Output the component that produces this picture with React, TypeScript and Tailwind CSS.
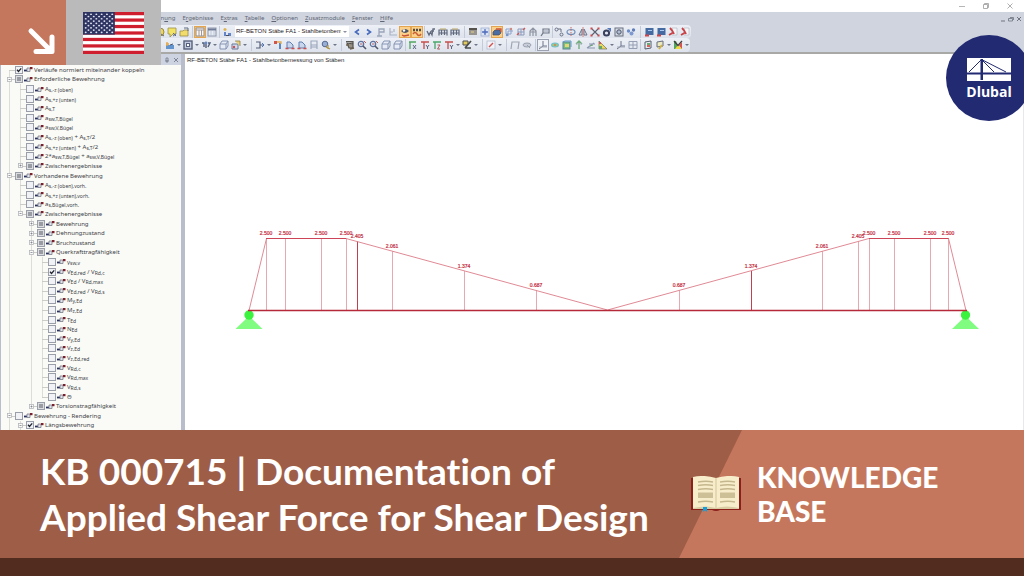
import { useEffect, useRef } from "react";
import type { ReactNode } from "react";

/* ---------- toolbar glyphs (12 x 12 grid) ---------- */

const glyphs: Record<string, ReactNode> = {
  coin: <><circle cx="6" cy="6" r="4" fill="#f2d335" stroke="#8a7a2a" /><path d="M7 8l3 2" stroke="#555" /></>,
  note: <><path d="M2 2h8v6H7l-3 3V8H2z" fill="#f6e24c" stroke="#8b8130" strokeWidth=".8" /><path d="M7 7l3 3M7 10l3-2" stroke="#4c5a78" /></>,
  folder: <><path d="M2 5h3l1-1h4v6H2z" fill="#f5dc55" stroke="#8d7b2c" strokeWidth=".8" /><path d="M6 2h4v3" fill="none" stroke="#4a5570" /></>,
  calc: <><rect x="2" y="2" width="8" height="8" fill="#fff" stroke="#7a7f94" /><path d="M2 4h8M5 4v6M7.500 4v6" stroke="#8d8fa2" /></>,
  table: <><rect x="2" y="2" width="8" height="8" fill="#e9edf5" stroke="#7d879c" /><path d="M2 3.500h8" stroke="#5a6786" strokeWidth="2" /><path d="M5 4v6M8 4v6" stroke="#a9b1c4" strokeWidth=".7" /></>,
  load: <><path d="M4 2v3M2.500 3.500h3" stroke="#e0a92c" strokeWidth="1.300" fill="none" /><path d="M3 6h2v4H3zM7 7h3v3H7z" fill="#4d74c4" /><path d="M5 9.500h3" stroke="#333" /></>,
  prev: <path d="M8 3.500L4.500 6 8 8.500" fill="none" stroke="#2d55b5" strokeWidth="1.600" />,
  next: <path d="M4 3.500L7.500 6 4 8.500" fill="none" stroke="#2d55b5" strokeWidth="1.600" />,
  flag: <><path d="M4 10V3h5v3H4M2 10h5" fill="none" stroke="#8f9ab0" strokeWidth="1.300" /></>,
  axis: <><path d="M3 2v7h7M3 6h3M7 3v3" fill="none" stroke="#a2abbd" strokeWidth="1.200" /></>,
  eye: <><path d="M2 5q4-4 8 0-4 4-8 0z" fill="#31405f" /><circle cx="5" cy="4.500" r="1.200" fill="#fff" /><path d="M3 9l2 1 5-1" stroke="#c03a2a" strokeWidth="1.300" fill="none" /></>,
  values: <><path d="M2 4h2M5 4h2M8 4h2" stroke="#333" strokeWidth="2.500" /><path d="M2 8q2-3 4 0t4 0" stroke="#c24b26" strokeWidth="1.500" fill="none" /></>,
  glasses: <><path d="M2 5l2 4 1.500-3L7 9l1-6h2M6 5h3" fill="none" stroke="#4b5469" strokeWidth="1.300" /></>,
  beam: <><path d="M2 9.500V4h8v5.500M2 7h8M4.500 4v5M7.500 4v5" stroke="#49536a" fill="none" strokeWidth="1.200" /><path d="M3 3h6" stroke="#b59b4a" /></>,
  card: <><rect x="2" y="3" width="8" height="6" fill="#8b877f" /><path d="M2 3h8" stroke="#3d3931" strokeWidth="2" /><path d="M4 6h3" stroke="#e8cd72" /></>,
  target: <><rect x="2" y="2" width="8" height="8" fill="#dde5f6" stroke="#889cc8" strokeWidth=".7" /><path d="M6 3v6M3 6h6" stroke="#4163b6" strokeWidth="1.300" /><circle cx="6" cy="6" r="1.600" fill="#4163b6" /></>,
  car: <><path d="M2 6l2-2h5l1 3-2 2H2z" fill="#2e5ba9" stroke="#273353" strokeWidth=".7" /><path d="M5 3h5v3" stroke="#c63c2b" fill="none" strokeWidth="1.300" /></>,
  nodes: <><path d="M3 3h5v5H3zM5 5h5M5 10V5" fill="none" stroke="#7f98c7" /><circle cx="8" cy="3" r="1.200" fill="#ca766c" /><circle cx="4" cy="9" r="1.200" fill="#6a87bd" /></>,
  cubeRed: <><path d="M3 3h6v6H3zM3 6h6M6 3v6" fill="none" stroke="#7d8fb4" /><path d="M2 9l2-2M8 4l2-2" stroke="#c34340" strokeWidth="1.400" /></>,
  build: <><path d="M3 10V5l3-3 3 3v5M3 6h6M6 3v7" stroke="#7f8594" fill="none" strokeWidth="1.200" /></>,
  frameP: <><path d="M2 10L4 7V3h6v4H4" fill="none" stroke="#5b6375" strokeWidth="1.200" /><path d="M5 5h4" stroke="#8a92a5" /></>,
  copyNode: <><circle cx="3.500" cy="3.500" r="1.500" fill="none" stroke="#525a70" /><circle cx="8.500" cy="8.500" r="1.500" fill="none" stroke="#525a70" /><path d="M5 3h3v3" stroke="#525a70" fill="none" /></>,
  rotate: <><ellipse cx="6" cy="6" rx="4" ry="2.500" fill="none" stroke="#5a7fae" strokeWidth="1.200" /><path d="M6 1v10" stroke="#c3534b" strokeDasharray="1.500 1" /></>,
  mirror: <><path d="M5 3v6H2zM7 3v6h3z" fill="none" stroke="#565f76" /><path d="M6 1v10" stroke="#c3534b" strokeWidth=".8" /></>,
  cross: <><path d="M3 3l6 6M9 3L3 9" stroke="#42485a" strokeWidth="1.100" /><path d="M1.500 1.500h2v2h-2zM8.500 1.500h2v2h-2zM1.500 8.500h2v2h-2zM8.500 8.500h2v2h-2z" fill="#c62f31" /></>,
  ring: <><circle cx="5.500" cy="7" r="2.600" fill="none" stroke="#1d2444" strokeWidth="2" /><path d="M6 2h4v4" fill="#3e65b0" /></>,
  lens: <><rect x="2" y="2" width="8" height="8" fill="#d7dae2" stroke="#555c6e" /><circle cx="6" cy="6" r="2.200" fill="#a8b6ce" stroke="#333c54" /></>,
  balls: <><circle cx="3.500" cy="5" r="1.700" fill="#587dc2" /><circle cx="8.500" cy="4" r="1.700" fill="#496aab" /><circle cx="6.500" cy="7.500" r="2" fill="#6c8cca" /></>,
  screen: <><rect x="2.500" y="2" width="8" height="7" fill="#2a5595" /><path d="M5 4.500h4" stroke="#9fc3f3" /><path d="M2 9.500h4" stroke="#ce2a2a" strokeWidth="2" /></>,
  pdf: <><path d="M5 2h5v7H5z" fill="#f7f7f9" stroke="#a7a7b4" strokeWidth=".6" /><path d="M3 2q3 3 4 6M2 9l5-3" stroke="#c4262b" strokeWidth="1.800" fill="none" /></>,
  newLoad: <><path d="M2 6h8v4H2z" fill="#4e86c7" /><path d="M3 3v4M2 5h3" stroke="#e59f30" strokeWidth="1.400" /><path d="M6 6l3-1" stroke="#253957" /></>,
  square: <><rect x="2" y="2" width="8" height="8" fill="#bcc6dc" stroke="#3f4a68" strokeWidth="1.400" /><rect x="4.500" y="4.500" width="3" height="3" fill="#fff" stroke="#3f4a68" /></>,
  hinge: <><path d="M2 4h2v4M6 3v6M8 4h2L8 8" stroke="#3b4864" fill="none" strokeWidth="1.400" /><circle cx="6" cy="4" r="1.400" fill="#4f79bd" /></>,
  box: <><path d="M2 5l2-3h6v5l-2 3H2zM2 5h6v5M8 5l2-3" fill="#e7ecf6" stroke="#7787a9" /></>,
  boxRed: <><path d="M2 5h6v5H2z" fill="#cfd9ec" stroke="#566788" /><path d="M5 2h5v5" fill="#e9cc64" stroke="#7d6b31" strokeWidth=".8" /><circle cx="4" cy="8" r="1.200" fill="#c33" /></>,
  dim: <><path d="M2 3h4v6H2M6 6h4" fill="none" stroke="#3c4967" strokeWidth="1.200" /><path d="M8 4l2 2-2 2" fill="none" stroke="#3564b5" /></>,
  pin: <><path d="M8 4v6" stroke="#2f6abb" strokeWidth="1.800" /><path d="M2 2h3v3H2z" fill="#cf3b31" /><path d="M5 3h4v2" fill="none" stroke="#dba13a" strokeWidth="1.300" /></>,
  support: <><path d="M3 9V3h3l3 3v3z" fill="#c5d3ea" stroke="#4a6da6" /><path d="M1.500 9.500h3M7.500 9.500h3" stroke="#cc3732" strokeWidth="1.700" /></>,
  ghost: <><path d="M3 2h6v4H3zM3 10V6M9 10V6M3 8h6" fill="none" stroke="#8f9bb3" strokeWidth="1.100" /></>,
  globe: <><circle cx="5" cy="5" r="2.800" fill="#8aa5ce" stroke="#3d5380" /><path d="M6 8l4 2M8 6v4" stroke="#ac8a2c" strokeWidth="1.300" /></>,
  fit: <><path d="M2 2.500h7v2M3 4l2 5h4V5z" fill="#8b8272" stroke="#3e3b35" strokeWidth="1.200" /><path d="M6 10l4-1M2 6h3" stroke="#594c35" fill="none" strokeWidth="1.300" /></>,
  zoom: <><circle cx="5" cy="5" r="2.700" fill="#dcebf9" stroke="#4a5f8d" strokeWidth="1.200" /><path d="M7 7l3 3" stroke="#393f53" strokeWidth="1.600" /><path d="M4 5h2.500M8 2l2 2" stroke="#b74a44" /></>,
  xAxis: <><path d="M2 3h7M3 3v7" stroke="#389b48" strokeWidth="1.300" fill="none" /><path d="M6 6l3 4M9 6l-3 4" stroke="#3a4564" strokeWidth=".9" /></>,
  yAxis: <><path d="M2 3h8M5 3v7" stroke="#c13432" strokeWidth="1.300" fill="none" /><path d="M7 6l1.500 2L10 6M8.500 8v2" stroke="#34405c" fill="none" strokeWidth=".9" /></>,
  zAxis: <><path d="M2 3h8M4 3v7" stroke="#2f9a53" strokeWidth="1.300" fill="none" /><path d="M6.500 6H9L6.500 10H9" stroke="#a73535" fill="none" strokeWidth=".9" /></>,
  tools: <><path d="M2 2h5v4H2z" fill="#e2c640" stroke="#32342f" /><path d="M10 2L4 9M4 9h6" stroke="#32342f" strokeWidth="1.700" /></>,
  pencil: <><rect x="2" y="2" width="8" height="8" fill="#f3f5fa" stroke="#a5afc3" strokeWidth=".7" /><path d="M4 8l4-4" stroke="#cf3a35" strokeWidth="1.500" /></>,
  portal: <path d="M2 10l1-7h7l-1 7" fill="none" stroke="#949ba9" strokeWidth="1.200" />,
  pill: <><ellipse cx="6" cy="6" rx="4" ry="2" fill="#c2c8d2" stroke="#8e96a6" /><path d="M6 6l3 3" stroke="#8e96a6" /></>,
  origin: <><path d="M6 2v5h4M6 7L2 10" fill="none" stroke="#59617a" /><path d="M2 8h8" stroke="#8d94a5" strokeWidth=".8" /></>,
  iso: <><ellipse cx="6" cy="6" rx="4" ry="2.500" fill="#5fb4d2" /><ellipse cx="6" cy="6" rx="2.800" ry="1.500" fill="#92cf64" /><ellipse cx="6" cy="6" rx="1.300" ry=".8" fill="#dd5540" /></>,
  isoBox: <><rect x="2" y="3" width="7" height="7" fill="#69b86b" stroke="#3f7389" /><path d="M4 5h4v3H4z" fill="#e3d662" /><path d="M2 3l2-1h6v6" fill="none" stroke="#4a8fc0" /></>,
  arrowUp: <><path d="M6 10V3M3 5l3-3 3 3" stroke="#57a065" strokeWidth="1.300" fill="none" /><path d="M3 5h6" stroke="#a3a9b7" /></>,
  slope: <><path d="M2 9l7-5M2 9h8M4 5h6" stroke="#7f8ca6" strokeWidth="1.100" fill="none" /><path d="M5 7l3-1" stroke="#57a065" /></>,
  legend: <><path d="M2 2l8 8H2z" fill="#f0d643" stroke="#5b5b49" strokeWidth=".7" /><path d="M2 7h3v3H2z" fill="#4f9c51" /><path d="M2 3h2v2H2z" fill="#cf413a" /></>,
  grid: <path d="M2 2.500h8v7H2zM2 6h8M6 2.500v7" fill="none" stroke="#8993ab" />,
  panelG: <><path d="M3 3l6-1v7l-6 1z" fill="#eef1f4" stroke="#3b4456" /><path d="M5 4h3v2H5z" fill="#51a361" /><path d="M5 6h3v2H5z" fill="#db4c3e" /></>,
  panelY: <><path d="M3 3l6-1v5l-6 1z" fill="#eceab7" stroke="#52576a" /><path d="M8 6l-3 4" stroke="#cba92c" strokeWidth="1.800" /></>,
  rainbow: <><path d="M2 2h2l3 8H2z" fill="#379a47" /><path d="M3 10l3-4 4 4z" fill="#f2d92a" /><path d="M2 2l4 4.500L10 2" stroke="#232323" strokeWidth="1.300" fill="none" /><path d="M7 6.500L10 3v7z" fill="#d7382d" /></>,
};

type Tool = string;

/* "|" divides two groups, "v" is a small drop-down arrow, "*" marks a pressed button and "+" a framed one */
const rowOneStart: Tool[] = ["coin", "note", "folder", "|m", "*calc", "table", "|s", "load"];
const rowOneEnd: Tool[] = [
  "prev", "next", "flag", "axis", "*eye", "*values", "|xs",
  "glasses", "beam", "beam", "|l",
  "card", "target", "*car", "nodes", "cubeRed", "build", "frameP", "|xs",
  "copyNode", "rotate", "mirror", "cross", "ring", "lens", "balls", "|l",
  "screen", "screen", "pdf", "pdf",
];
const rowTwo: Tool[] = [
  "newLoad", "v", "square", "v", "hinge", "v", "box", "boxRed", "v", "|l",
  "dim", "v", "pin", "support", "support", "ghost", "globe", "v", "|l",
  "fit", "zoom", "zoom", "box", "box", "|s",
  "xAxis", "yAxis", "zAxis", "yAxis", "v", "tools", "v", "|l",
  "pencil", "v", "|l", "portal", "pill", "|m",
  "+origin", "iso", "isoBox", "arrowUp", "slope", "legend", "v", "origin", "grid", "|s",
  "panelG", "panelY", "v", "rainbow", "v",
];

const dividerWidth: Record<string, string> = {
  "|xs": "w-[2px]",
  "|s": "w-[3px]",
  "|m": "w-1",
  "|l": "w-[6px]",
};

function ToolItem({ tool }: { tool: Tool }) {
  if (tool.startsWith("|")) {
    return (
      <span className={`${dividerWidth[tool]} flex h-3 shrink-0 justify-center`}>
        <span className="h-full w-px bg-[#c3cad8]" />
      </span>
    );
  }
  if (tool === "v") {
    return (
      <button type="button" aria-label="More" className="flex h-3 w-[6px] shrink-0 items-center justify-center">
        <svg viewBox="0 0 4 4" className="size-[4px]"><path d="M0 1h4L2 3z" fill="#6d7587" /></svg>
      </button>
    );
  }
  const pressed = tool.startsWith("*");
  const boxed = tool.startsWith("+");
  const name = tool.replace(/^[*+]/, "");
  const tone = pressed
    ? "bg-[#fbd08a] outline outline-[#e3a550] -outline-offset-1"
    : boxed
      ? "bg-[#eef1f6] outline outline-[#9aa1b0] -outline-offset-1"
      : "";
  return (
    <button type="button" aria-label={name} className={`size-3 shrink-0 ${tone}`}>
      <svg viewBox="0 0 12 12" className="size-3 opacity-85">{glyphs[name]}</svg>
    </button>
  );
}

/* ---------- result tree ---------- */

type State = "off" | "on" | "mixed";
type Row = { level: number; state: State; label: ReactNode; expander?: "+" | "-" };

function S({ children }: { children: ReactNode }) {
  return <span className="relative top-px text-[5px]">{children}</span>;
}

const rows: Row[] = [
  { level: 0, state: "on", label: "Verläufe normiert miteinander koppeln" },
  { level: 0, state: "mixed", label: "Erforderliche Bewehrung", expander: "-" },
  { level: 1, state: "off", label: <>A<S>s,-z (oben)</S></> },
  { level: 1, state: "off", label: <>A<S>s,+z (unten)</S></> },
  { level: 1, state: "off", label: <>A<S>s,T</S></> },
  { level: 1, state: "off", label: <>a<S>sw,T,Bügel</S></> },
  { level: 1, state: "off", label: <>a<S>sw,V,Bügel</S></> },
  { level: 1, state: "off", label: <>A<S>s,-z (oben)</S> + A<S>s,T</S>/2</> },
  { level: 1, state: "off", label: <>A<S>s,+z (unten)</S> + A<S>s,T</S>/2</> },
  { level: 1, state: "off", label: <>2*a<S>sw,T,Bügel</S> + a<S>sw,V,Bügel</S></> },
  { level: 1, state: "mixed", label: "Zwischenergebnisse", expander: "+" },
  { level: 0, state: "mixed", label: "Vorhandene Bewehrung", expander: "-" },
  { level: 1, state: "off", label: <>A<S>s,-z (oben),vorh.</S></> },
  { level: 1, state: "off", label: <>A<S>s,+z (unten),vorh.</S></> },
  { level: 1, state: "off", label: <>a<S>s,Bügel,vorh.</S></> },
  { level: 1, state: "mixed", label: "Zwischenergebnisse", expander: "-" },
  { level: 2, state: "mixed", label: "Bewehrung", expander: "+" },
  { level: 2, state: "mixed", label: "Dehnungzustand", expander: "+" },
  { level: 2, state: "mixed", label: "Bruchzustand", expander: "+" },
  { level: 2, state: "mixed", label: "Querkrafttragfähigkeit", expander: "-" },
  { level: 3, state: "off", label: <>γ<S>sw,v</S></> },
  { level: 3, state: "on", label: <>V<S>Ed,red</S> / V<S>Rd,c</S></> },
  { level: 3, state: "off", label: <>V<S>Ed</S> / V<S>Rd,max</S></> },
  { level: 3, state: "off", label: <>V<S>Ed,red</S> / V<S>Rd,s</S></> },
  { level: 3, state: "off", label: <>M<S>y,Ed</S></> },
  { level: 3, state: "off", label: <>M<S>z,Ed</S></> },
  { level: 3, state: "off", label: <>T<S>Ed</S></> },
  { level: 3, state: "off", label: <>N<S>Ed</S></> },
  { level: 3, state: "off", label: <>V<S>y,Ed</S></> },
  { level: 3, state: "off", label: <>V<S>z,Ed</S></> },
  { level: 3, state: "off", label: <>V<S>z,Ed,red</S></> },
  { level: 3, state: "off", label: <>V<S>Rd,c</S></> },
  { level: 3, state: "off", label: <>V<S>Rd,max</S></> },
  { level: 3, state: "off", label: <>V<S>Rd,s</S></> },
  { level: 3, state: "off", label: "Θ" },
  { level: 2, state: "mixed", label: "Torsionstragfähigkeit", expander: "+" },
  { level: 0, state: "off", label: "Bewehrung - Rendering", expander: "-" },
  { level: 1, state: "on", label: "Längsbewehrung", expander: "-" },
];

/* Whether the branch at the given level goes on below the row. */
function continues(index: number, level: number) {
  for (let i = index + 1; i < rows.length; i++) {
    if (rows[i].level < level) return false;
    if (rows[i].level === level) return true;
  }
  return level < 2;
}

function Guide({ index, cell }: { index: number; cell: number }) {
  const row = rows[index];
  const own = cell === row.level;
  const down = continues(index, cell);
  return (
    <span className="relative flex w-[11px] shrink-0 items-center justify-center self-stretch">
      {own && index > 0 && <span className="absolute top-0 left-[5px] h-1/2 border-l border-[#dcdcd8]" />}
      {own && down && <span className="absolute bottom-0 left-[5px] h-1/2 border-l border-[#dcdcd8]" />}
      {!own && down && <span className="absolute inset-y-0 left-[5px] border-l border-[#dcdcd8]" />}
      {own && <span className="absolute top-1/2 right-0 w-[6px] border-t border-[#cbcbc7]" />}
      {own && row.expander && (
        <svg viewBox="0 0 5 5" className="relative size-[5px]">
          <rect x=".5" y=".5" width="4" height="4" fill="#fbfbf8" stroke="#b3b5ba" strokeWidth=".8" />
          <path d={row.expander === "+" ? "M1.500 2.500h2M2.500 1.500v2" : "M1.500 2.500h2"} stroke="#7b808c" strokeWidth=".8" />
        </svg>
      )}
    </span>
  );
}

function TreeRow({ index }: { index: number }) {
  const row = rows[index];
  const box = useRef<HTMLInputElement>(null);
  useEffect(() => {
    if (box.current) box.current.indeterminate = row.state === "mixed";
  }, [row.state]);
  const cells = Array.from({ length: row.level + 1 }, (_, i) => i);
  return (
    <li className="flex min-h-0 flex-1 items-center pl-[3px]">
      {cells.map((cell) => <Guide key={cell} index={index} cell={cell} />)}
      <label className="flex items-center whitespace-nowrap">
        <span className="grid size-2 place-items-center">
          <input
            ref={box}
            type="checkbox"
            defaultChecked={row.state === "on"}
            className="peer col-start-1 row-start-1 size-2 appearance-none border border-[#9a9ea8] bg-[#f1f2f5] indeterminate:bg-[#dcdde0]"
          />
          <svg viewBox="0 0 8 8" className="pointer-events-none col-start-1 row-start-1 hidden size-2 peer-checked:block">
            <path d="M2 3.800l1.500 1.700L6.200 2.300" fill="none" stroke="#20242e" strokeWidth="1.300" />
          </svg>
          <span className="pointer-events-none col-start-1 row-start-1 hidden size-1 bg-[#9a9ca3] peer-indeterminate:block" />
        </span>
        <svg viewBox="0 0 9 7" className="mx-px h-[7px] w-[9px]">
          <path d="M0 4.500h3" stroke="#2a3160" strokeWidth="1.800" />
          <path d="M3 2h3v3.500H3z" fill="#dfe2e8" stroke="#777c88" strokeWidth=".8" />
          <path d="M6 1h2.500v2.200H6z" fill="#7c1f2c" />
        </svg>
        <span>{row.label}</span>
      </label>
    </li>
  );
}

/* ---------- result diagram ---------- */

const ordinates: { x: number; y: number; value: string; strong?: boolean }[] = [
  { x: 266, y: 238, value: "2.500" },
  { x: 285, y: 238, value: "2.500" },
  { x: 321, y: 238, value: "2.500" },
  { x: 346, y: 238, value: "2.500" },
  { x: 357, y: 241, value: "2.405", strong: true },
  { x: 392, y: 251, value: "2.061" },
  { x: 464, y: 271, value: "1.374" },
  { x: 536, y: 290, value: "0.687" },
  { x: 679, y: 290, value: "0.687" },
  { x: 751, y: 271, value: "1.374", strong: true },
  { x: 822, y: 251, value: "2.061" },
  { x: 858, y: 241, value: "2.405" },
  { x: 869, y: 238, value: "2.500" },
  { x: 894, y: 238, value: "2.500" },
  { x: 930, y: 238, value: "2.500" },
  { x: 948, y: 238, value: "2.500" },
];

function Diagram() {
  return (
    <svg viewBox="185 68 838 362" className="min-h-0 w-full flex-1" role="img" aria-label="Shear force ratio along the beam">
      {ordinates.map((o) => (
        <path key={o.x} d={`M${o.x + 0.5} ${o.y}V310`} stroke={o.strong ? "#c0404f" : "#e6a9b2"} strokeWidth="1" />
      ))}
      <path d="M249 310.500L266.500 238.500H346L607.500 310L869 238.500H948.500L966 310.500" fill="none" stroke="#e08a95" strokeWidth="1" />
      <path d="M266 238.500H346M869 238.500H948.500" stroke="#cc4455" strokeWidth="1" />
      {[249, 965.5].map((x) => (
        <g key={x}>
          <path d={`M${x} 316L${x + 13.5} 329H${x - 13.5}z`} fill="#80fc80" />
          <circle cx={x} cy="315" r="4.700" fill="#3bf23f" />
        </g>
      ))}
      <path d="M248 310.500H967" stroke="#b5293a" strokeWidth="1.600" />
      <g fill="#c22a3c" stroke="#c22a3c" strokeWidth=".2" fontFamily="Liberation Sans, sans-serif" fontSize="5" textAnchor="middle">
        {ordinates.map((o) => (
          <text key={o.x} x={o.x} y={o.y - 3}>{o.value}</text>
        ))}
      </g>
    </svg>
  );
}

/* ---------- logos and drawings ---------- */

function UsFlag() {
  const stripes = [0, 2, 4, 6, 8, 10, 12];
  return (
    <svg viewBox="0 0 247 130" preserveAspectRatio="none" className="h-[42px] w-[61px]" role="img" aria-label="United States">
      <rect width="247" height="130" fill="#fff" />
      {stripes.map((s) => <rect key={s} y={s * 10} width="247" height="10" fill="#cf1f2e" />)}
      <rect width="129" height="70" fill="#2e3563" />
      {Array.from({ length: 9 }, (_, r) =>
        Array.from({ length: r % 2 ? 5 : 6 }, (_, c) => (
          <ellipse key={`${r}-${c}`} cx={(r % 2 ? 22 : 11) + c * 21.5} cy={7 + r * 7} rx="4" ry="2.600" fill="#dfe2ec" />
        )),
      )}
    </svg>
  );
}

function DlubalBadge() {
  return (
    <div className="absolute top-[35px] -right-[8px] flex size-[86px] flex-col items-center justify-center rounded-full bg-[#222a72] pt-1 text-white">
      <svg viewBox="0 0 44 23" className="h-[23px] w-[44px]" aria-hidden="true">
        <rect width="44" height="23" fill="#fff" />
        <path d="M0 14.500h44v2H0z" fill="#222a72" />
        <path d="M13.500 1h2.500v21h-2.500z" fill="#222a72" />
        <path d="M14 2L2 14M15 2l12 12M15.500 2L39 14" stroke="#222a72" strokeWidth="1" fill="none" />
      </svg>
      <span className="font-['Open_Sans'] text-[14px] leading-[21px] font-bold">Dlubal</span>
    </div>
  );
}

function Book() {
  return (
    <svg viewBox="0 0 50 36" className="h-[36px] w-[50px] shrink-0" aria-hidden="true">
      <path d="M0 2h50v32H29q-4 2-8 0H0z" fill="#8c1f1a" />
      <path d="M2 1q12-2.500 23 1 11-3.500 23-1v31H2z" fill="#f8edcb" />
      <path d="M2 32q13-3 23 0 10-3 23 0v1H2z" fill="#d9cca3" />
      <path d="M24 2h2v30h-2z" fill="#e6d9b2" />
      <g stroke="#c5b78d" strokeWidth="1.300" fill="none">
        <path d="M7 6q8-1.500 15 0M7 9.500q8-1.500 15 0M7 13.500q8-1.500 15 0M7 26q8-1.500 15 0" />
        <path d="M29 6q8-1.500 15 0M29 9.500q8-1.500 15 0M29 13.500q8-1.500 15 0M29 26q8-1.500 15 0" />
      </g>
      <path d="M7 16.500h15v5.500H7zM29 16.500h15v5.500H29z" fill="#cdc096" />
      <path d="M12 31h4v5l-2-1.500-2 1.500z" fill="#159fd8" />
    </svg>
  );
}

const menus = [
  ["Berechn", "u", "ng"],
  ["E", "r", "gebnisse"],
  ["E", "x", "tras"],
  ["", "T", "abelle"],
  ["", "O", "ptionen"],
  ["", "Z", "usatzmodule"],
  ["", "F", "enster"],
  ["", "H", "ilfe"],
];

export default function App() {
  return (
    <div className="relative flex h-screen flex-col overflow-hidden bg-white font-['Noto_Sans',sans-serif]">
      <section className="flex min-h-0 flex-1 flex-col text-[6px] text-[#3c3f47]">
        <div className="flex h-3 shrink-0 items-center justify-end gap-4 pr-[10px]">
          <button type="button" aria-label="Minimize" className="size-2">
            <svg viewBox="0 0 8 8"><path d="M1 4.500h6" stroke="#b5b5b5" /></svg>
          </button>
          <button type="button" aria-label="Restore" className="size-2">
            <svg viewBox="0 0 8 8"><path d="M1.500 2.500h4v4h-4zM2.500 2.500v-1h4v4h-1" fill="none" stroke="#9a9a9a" strokeWidth=".8" /></svg>
          </button>
          <button type="button" aria-label="Close" className="size-2">
            <svg viewBox="0 0 8 8"><path d="M1.500 1.500l5 5M6.500 1.500l-5 5" stroke="#9a9a9a" strokeWidth=".8" /></svg>
          </button>
        </div>

        <header className="shrink-0 border-b-2 border-[#a8a9a6] bg-[#cfd4de]">
          <div className="flex h-[13px] items-center justify-between pr-[2px]">
            <nav className="flex gap-[7px] pl-[141px] text-[#5f6675]">
              {menus.map(([a, b, c]) => (
                <button key={b + c} type="button">{a}<u>{b}</u>{c}</button>
              ))}
            </nav>
            <div className="flex gap-[2px] text-[#7b808c]">
              <svg viewBox="0 0 6 6" className="size-[6px]"><path d="M1 5h4" stroke="#6f7482" /></svg>
              <svg viewBox="0 0 6 6" className="size-[6px]"><path d="M.5 2.500h4v2.500h-4zM2 1.500h3.500v2.500" fill="none" stroke="#6f7482" strokeWidth=".8" /></svg>
              <svg viewBox="0 0 6 6" className="size-[6px]"><path d="M1 1l4 4M5 1L1 5" stroke="#6f7482" /></svg>
            </div>
          </div>
          <div className="flex">
            <div className="flex h-[13px] items-center rounded-r bg-linear-to-b from-[#edf0f6] to-[#dde2ec] pl-[154px]">
              {rowOneStart.map((t, i) => <ToolItem key={i} tool={t} />)}
              <span className="mx-[2px] flex items-center bg-white">
                <select
                  aria-label="Load case"
                  defaultValue="fa1"
                  className="h-[11px] w-[106px] appearance-none bg-white pl-px font-['Liberation_Sans'] text-[6px] leading-[11px] text-[#1f2127]"
                >
                  <option value="fa1">RF-BETON Stäbe FA1 - Stahlbetonbemessung</option>
                </select>
                <svg viewBox="0 0 8 4" className="pointer-events-none h-1 w-2"><path d="M2 1h4L4 3z" fill="#8a909e" /></svg>
              </span>
              {rowOneEnd.map((t, i) => <ToolItem key={i} tool={t} />)}
            </div>
          </div>
          <div className="flex">
            <div className="flex h-[14px] items-center rounded-r bg-linear-to-b from-[#edf0f6] to-[#dde2ec] pl-[164px]">
              {rowTwo.map((t, i) => <ToolItem key={i} tool={t} />)}
            </div>
          </div>
        </header>

        <div className="flex min-h-0 flex-1">
          <aside className="flex w-[185px] shrink-0 flex-col border-r-4 border-l border-r-[#b9bccb] border-l-[#b9bdcc] bg-[#fafaf6]">
            <div className="flex h-[11px] shrink-0 items-center justify-end gap-[3px] bg-[#cdd3e0] pr-[2px]">
              <svg viewBox="0 0 6 6" className="size-[6px]"><path d="M2 1h2v3H2zM1 4h4M3 4v2" fill="none" stroke="#767c8c" strokeWidth=".8" /></svg>
              <svg viewBox="0 0 6 6" className="size-[6px]"><path d="M1 1l4 4M5 1L1 5" stroke="#767c8c" strokeWidth=".9" /></svg>
            </div>
            <ul className="flex min-h-0 flex-1 flex-col leading-[8px]">
              {rows.map((_, i) => <TreeRow key={i} index={i} />)}
            </ul>
          </aside>
          <main className="flex min-w-0 flex-1 flex-col border-r border-[#e8e8ea] bg-white">
            <h2 className="h-[14px] shrink-0 pl-[2px] font-['Liberation_Sans'] text-[6px] leading-3 text-[#2b2b2e]">
              RF-BETON Stäbe FA1 - Stahlbetonbemessung von Stäben
            </h2>
            <Diagram />
          </main>
        </div>
      </section>

      <div className="absolute top-0 left-0 flex h-[65px]">
        <div className="w-[66px] bg-[#c5775d]">
          <svg viewBox="0 0 66 65" className="h-full w-full" aria-hidden="true">
            <path d="M31 31L51 51M36 51.500H52V37" fill="none" stroke="#fff" strokeWidth="5" strokeLinecap="round" strokeLinejoin="round" />
          </svg>
        </div>
        <div className="flex w-[95px] items-center justify-center bg-[#bababa]">
          <UsFlag />
        </div>
      </div>

      <DlubalBadge />

      <footer className="shrink-0">
        <div className="relative flex h-32 items-center bg-[#9e5d47] text-white">
          <div className="absolute inset-y-0 right-0 w-[345px] bg-[#c5775d] [clip-path:polygon(63px_0,100%_0,100%_100%,0_100%)]" />
          <h1 className="min-w-0 flex-1 pl-10 font-['Lato'] text-[37px] leading-[46px] font-bold whitespace-nowrap [font-variant-ligatures:none]">
            KB 000715 | Documentation of
            <br />
            Applied Shear Force for Shear Design
          </h1>
          <div className="relative flex w-[333px] shrink-0 items-center gap-4">
            <Book />
            <p className="font-['Lato'] text-[28px] leading-[34px] font-black">
              KNOWLEDGE
              <br />
              BASE
            </p>
          </div>
        </div>
        <div className="h-[18px] bg-[#532c20]" />
      </footer>
    </div>
  );
}
